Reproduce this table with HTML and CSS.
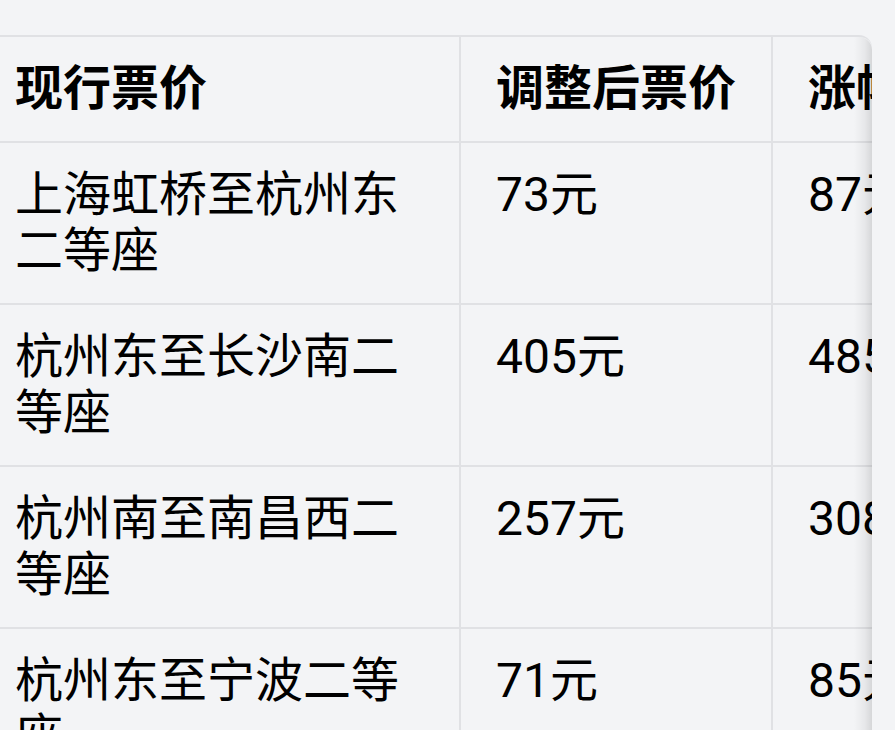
FILE: index.html
```html
<!DOCTYPE html>
<html lang="zh-CN">
<head>
<meta charset="utf-8">
<title>票价调整</title>
<link rel="stylesheet" href="styles.css">
</head>
<body>
<div class="page">
  <div class="table-box">
    <table class="fares">
      <colgroup>
        <col class="c1"><col class="c2"><col class="c3">
      </colgroup>
      <thead>
        <tr><th>现行票价</th><th>调整后票价</th><th>涨幅</th></tr>
      </thead>
      <tbody>
        <tr><td>上海虹桥至杭州东二等座</td><td>73元</td><td>87元</td></tr>
        <tr><td>杭州东至长沙南二等座</td><td>405元</td><td>485元</td></tr>
        <tr><td>杭州南至南昌西二等座</td><td>257元</td><td>308元</td></tr>
        <tr><td>杭州东至宁波二等座</td><td>71元</td><td>85元</td></tr>
      </tbody>
    </table>
    <div class="edge-shadow"></div>
  </div>
</div>
</body>
</html>
```
FILE: styles.css
```css
html, body {
  margin: 0;
  padding: 0;
  background: #f3f4f6;
}
body {
  width: 895px;
  height: 730px;
  overflow: hidden;
  font-family: Roboto, "Noto Sans CJK SC", sans-serif;
  color: #000;
}
.page {
  padding: 35px 23px 0 0;
}
.table-box {
  position: relative;
  overflow: hidden;
  border-top: 2px solid #e0e1e4;
  border-radius: 0 13px 0 0;
}
.fares {
  margin-left: -22px;
  border-collapse: collapse;
  table-layout: fixed;
  width: 1100px;
  font-size: 48px;
  line-height: 56px;
}
.c1 { width: 482px; }
.c2 { width: 312px; }
.c3 { width: 306px; }
.fares th,
.fares td {
  padding: 24px 16px 24px 37px;
  text-align: left;
  vertical-align: top;
  border-bottom: 2px solid #e0e1e4;
  border-right: 2px solid #e0e1e4;
}
.fares th + th,
.fares td + td {
  padding-left: 35px;
}
.fares th {
  font-weight: 700;
  white-space: nowrap;
}
.fares td {
  font-weight: 400;
}
.edge-shadow {
  position: absolute;
  top: 0;
  right: 0;
  bottom: 0;
  width: 18px;
  background: linear-gradient(to right, rgba(0,0,0,0) 0%, rgba(0,0,0,0.05) 60%, rgba(0,0,0,0.12) 100%);
  border-radius: 0 13px 0 0;
}
```
